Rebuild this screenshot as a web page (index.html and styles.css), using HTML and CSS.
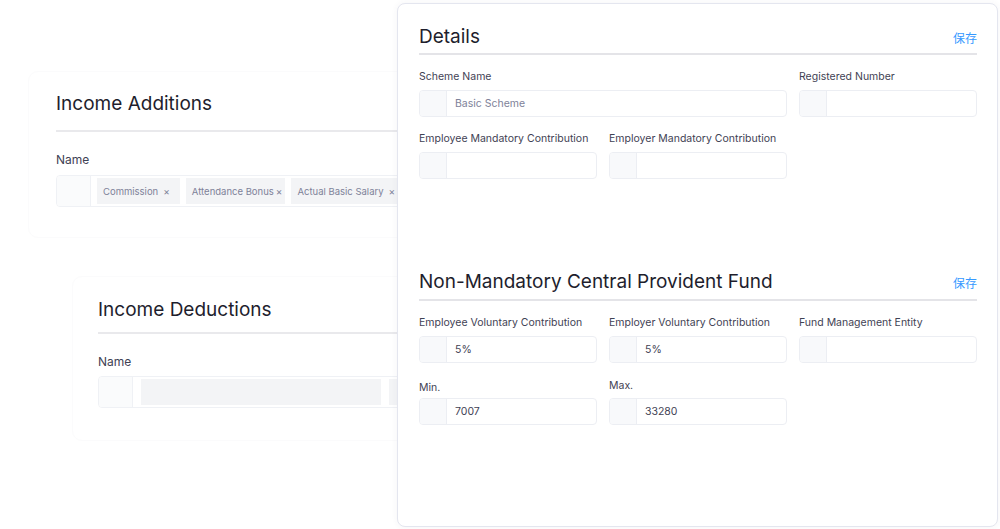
FILE: index.html
```html
<!DOCTYPE html>
<html>
<head>
  <title>Provident Fund Settings</title>
  <link rel="stylesheet" href="styles.css">
</head>
<body>
  <div class="stage">

    <div class="card card-additions">
      <h2 class="card-title">Income Additions</h2>
      <div class="field-label big">Name</div>
      <div class="tag-input">
        <span class="prefix"></span>
        <span class="tag">Commission <i>×</i></span>
        <span class="tag tight">Attendance Bonus<i>×</i></span>
        <span class="tag">Actual Basic Salary <i>×</i></span>
      </div>
    </div>

    <div class="card card-deductions">
      <h2 class="card-title">Income Deductions</h2>
      <div class="field-label big">Name</div>
      <div class="tag-input">
        <span class="prefix"></span>
        <span class="tag blank wide"></span>
        <span class="tag blank"></span>
      </div>
    </div>

    <div class="card card-details">
      <div class="section">
        <div class="section-head">
          <h2 class="card-title">Details</h2>
          <a class="save">保存</a>
        </div>
        <div class="form-grid">
          <div class="field span-2">
            <div class="field-label">Scheme Name</div>
            <div class="input"><span class="prefix"></span><span class="value muted">Basic Scheme</span></div>
          </div>
          <div class="field">
            <div class="field-label">Registered Number</div>
            <div class="input"><span class="prefix"></span><span class="value"></span></div>
          </div>
          <div class="field">
            <div class="field-label">Employee Mandatory Contribution</div>
            <div class="input"><span class="prefix"></span><span class="value"></span></div>
          </div>
          <div class="field">
            <div class="field-label">Employer Mandatory Contribution</div>
            <div class="input"><span class="prefix"></span><span class="value"></span></div>
          </div>
        </div>
      </div>

      <div class="section second">
        <div class="section-head">
          <h2 class="card-title">Non-Mandatory Central Provident Fund</h2>
          <a class="save">保存</a>
        </div>
        <div class="form-grid">
          <div class="field">
            <div class="field-label">Employee Voluntary Contribution</div>
            <div class="input"><span class="prefix"></span><span class="value">5%</span></div>
          </div>
          <div class="field">
            <div class="field-label">Employer Voluntary Contribution</div>
            <div class="input"><span class="prefix"></span><span class="value">5%</span></div>
          </div>
          <div class="field">
            <div class="field-label">Fund Management Entity</div>
            <div class="input"><span class="prefix"></span><span class="value"></span></div>
          </div>
          <div class="field">
            <div class="field-label low">Min.</div>
            <div class="input"><span class="prefix"></span><span class="value">7007</span></div>
          </div>
          <div class="field">
            <div class="field-label high">Max.</div>
            <div class="input"><span class="prefix"></span><span class="value">33280</span></div>
          </div>
        </div>
      </div>
    </div>

  </div>
</body>
</html>
```

FILE: styles.css
```css
body {
  margin: 0;
  background-color: #ffffff;
  font-family: "Inter", "Noto Sans", sans-serif;
  color: #3f4254;
}

.stage {
  position: relative;
  width: 1000px;
  height: 529px;
  overflow: hidden;
}

.card {
  position: absolute;
  box-sizing: border-box;
  background-color: #ffffff;
  border: 1px solid #fbfbfc;
  border-radius: 10px;
}

.card-title {
  margin: 0;
  font-size: 19px;
  font-weight: 400;
  line-height: 24px;
  color: #1e1e2d;
}

/* left cards */

.card-additions {
  left: 28px;
  top: 71px;
  width: 430px;
  height: 167px;
  padding: 20px 0 0 27px;
}

.card-deductions {
  left: 72px;
  top: 276px;
  width: 400px;
  height: 165px;
  padding: 21px 0 0 25px;
}

.card-additions .card-title {
  padding-bottom: 14px;
  border-bottom: 2px solid #e9e9ec;
}

.card-deductions .card-title {
  padding-bottom: 10px;
  border-bottom: 2px solid #e9e9ec;
}

.field-label.big {
  margin-top: 20px;
  font-size: 12px;
  line-height: 16px;
  color: #3f4254;
}

.card-deductions .field-label.big {
  margin-top: 20px;
  margin-bottom: -1px;
}

.tag-input {
  display: flex;
  align-items: center;
  gap: 6px;
  height: 32px;
  margin-top: 7px;
  border: 1px solid #eff1f5;
  border-radius: 4px;
  box-sizing: border-box;
  overflow: hidden;
}

.tag-input .prefix {
  width: 33px;
  height: 100%;
  background-color: #fafbfc;
  border-right: 1px solid #eff1f5;
  flex-shrink: 0;
}

.tag {
  flex-shrink: 0;
  height: 26px;
  padding: 0 10px 0 6px;
  display: flex;
  align-items: center;
  background-color: #f3f4f6;
  font-size: 9.5px;
  color: #7e8299;
  white-space: nowrap;
}

.tag i {
  font-style: normal;
  margin-left: 5px;
  font-size: 10px;
}

.tag.tight {
  padding-right: 3px;
}

.tag.tight i {
  margin-left: 2px;
}

.tag.blank {
  width: 100px;
  margin-left: 2px;
}

.tag.blank.wide {
  width: 224px;
}

/* details card */

.card-details {
  left: 397px;
  top: 3px;
  width: 601px;
  height: 524px;
  border: 1px solid #e4e6ef;
  border-radius: 8px;
  box-shadow: 0 0 6px rgba(60, 70, 110, 0.06);
  padding: 21px 20px 0 21px;
}

.section-head {
  display: flex;
  justify-content: space-between;
  align-items: center;
  padding-bottom: 4px;
  border-bottom: 2px solid #e4e4e8;
}

.save {
  font-family: "Noto Sans CJK SC", sans-serif;
  font-size: 12px;
  color: #3699ff;
  cursor: pointer;
}

.section.second {
  margin-top: 91px;
}

.section.second .section-head {
  padding-bottom: 5px;
}

.form-grid {
  display: grid;
  grid-template-columns: 178px 178px 178px;
  column-gap: 12px;
  row-gap: 14px;
  margin-top: 14px;
}

.field.span-2 {
  grid-column: span 2;
}

.field-label {
  font-size: 10.5px;
  line-height: 16px;
  color: #3f4254;
  margin-bottom: 5px;
  white-space: nowrap;
}

.field-label.low {
  margin-top: 3px;
  margin-bottom: 2px;
}

.field-label.high {
  margin-top: 1px;
  margin-bottom: 4px;
}

.input {
  display: flex;
  height: 27px;
  box-sizing: border-box;
  border: 1px solid #eceef3;
  border-radius: 4px;
  overflow: hidden;
}

.input .prefix {
  width: 26px;
  background-color: #f8f9fb;
  border-right: 1px solid #eceef3;
}

.input .value {
  padding-left: 8px;
  font-size: 10.5px;
  line-height: 25px;
  color: #3f4254;
}

.input .value.muted {
  color: #7e8299;
}
```
